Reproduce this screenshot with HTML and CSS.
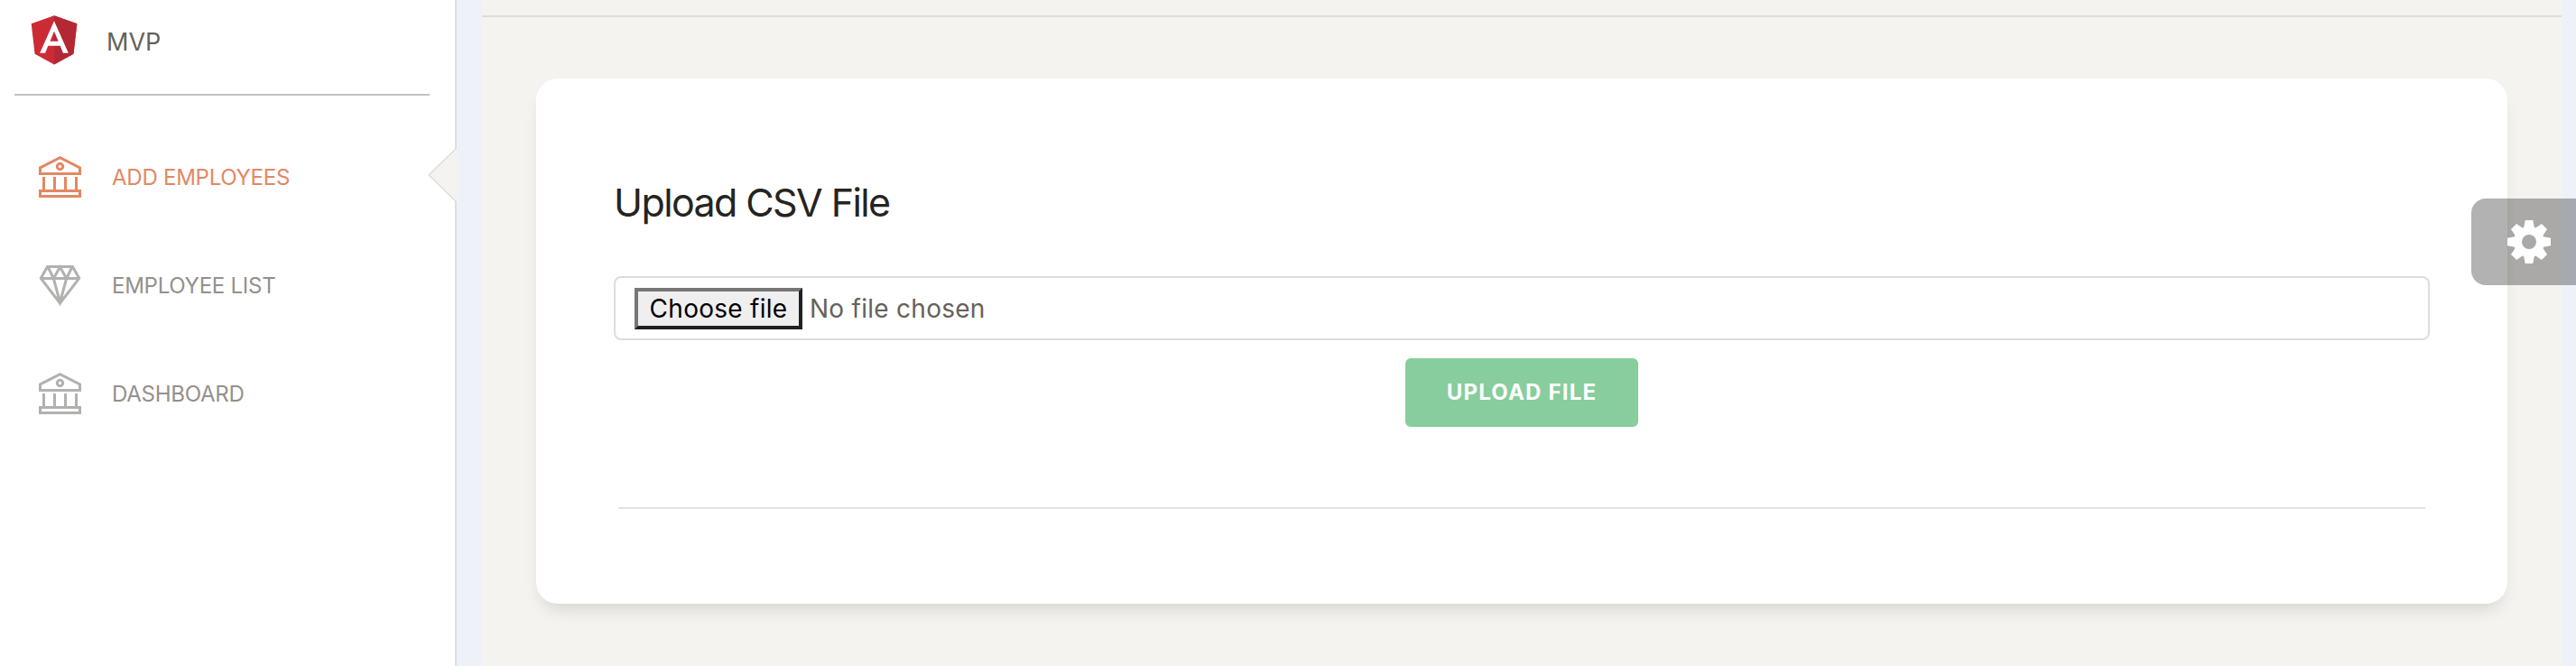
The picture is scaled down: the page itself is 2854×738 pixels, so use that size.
FILE: index.html
```html
<!DOCTYPE html>
<html lang="en">
<head>
<meta charset="utf-8">
<title>MVP</title>
<link rel="stylesheet" href="styles.css">
</head>
<body>
<svg class="defs" width="0" height="0" aria-hidden="true">
  <symbol id="bank" viewBox="0 0 47 46">
    <path d="M1.5 12.9 23.5 1.7l22 11.2v6.6h-44zM5.5 23v15M17.5 23v15M29.5 23v15M41.5 23v15M1.5 38.500h44v6h-44z"/>
    <circle cx="23.500" cy="11.500" r="3.200"/>
  </symbol>
  <symbol id="diamond" viewBox="0 0 47 46">
    <path d="M9.500 2.500h28l7.200 12.800L23.500 43 2.300 15.300zM2.300 15.500h42.400M10 2.500l6.300 13L23.500 3l7.200 12.500 6.300-13M16.300 15.500 23.500 42l7.200-26.500"/>
  </symbol>
</svg>
<div class="layout">
  <aside class="sidebar">
    <div class="brand">
      <svg class="logo" viewBox="0 0 250 250">
        <path fill="#cc2b36" d="M125 30 31.900 63.200l14.200 123.100L125 230l78.900-43.700 14.200-123.100z"/>
        <path fill="#b32833" d="M125 30v200l78.900-43.700 14.200-123.100z"/>
        <path fill="#fff" d="M125 52.100 66.800 182.600h21.700l11.700-29.200h49.400l11.700 29.200H183zm17 83.300h-34l17-40.900z"/>
      </svg>
      <span class="brand-name">MVP</span>
    </div>
    <nav class="nav">
      <a class="item active"><svg class="icon"><use href="#bank"/></svg><span>ADD EMPLOYEES</span>
        <svg class="notch" viewBox="0 0 32 60"><path d="M32 0 1 30l31 30z" fill="#f4f3ef"/><path d="M32 0 1 30l31 30" fill="none" stroke="#ddd" stroke-width="1.500"/></svg>
      </a>
      <a class="item"><svg class="icon"><use href="#diamond"/></svg><span>EMPLOYEE LIST</span></a>
      <a class="item"><svg class="icon"><use href="#bank"/></svg><span>DASHBOARD</span></a>
    </nav>
  </aside>
  <main class="main">
    <div class="topline"></div>
    <section class="card">
      <h1 class="title">Upload CSV File</h1>
      <div class="field">
        <button class="choose" type="button"><span>Choose file</span></button>
        <span class="none">No file chosen</span>
      </div>
      <button class="upload" type="button"><span>UPLOAD FILE</span></button>
      <div class="rule"></div>
    </section>
  </main>
  <div class="settings">
    <svg class="gear" viewBox="-24 -24 48 48">
      <circle r="12.500" fill="none" stroke="#fff" stroke-width="9"/>
      <g fill="#fff">
        <path id="teeth" d="M-6.500-14-5.600-17-4.300-24H4.300L5.600-17 6.500-14zM-6.500 14-5.600 17-4.300 24H4.300L5.600 17 6.500 14z"/>
        <use href="#teeth" transform="rotate(45)"/>
        <use href="#teeth" transform="rotate(90)"/>
        <use href="#teeth" transform="rotate(135)"/>
      </g>
    </svg>
  </div>
</div>
</body>
</html>
```
FILE: styles.css
```css
* { box-sizing: border-box; }
body { margin: 0; background: #eef2f8; font-family: Inter, "Liberation Sans", sans-serif; overflow: hidden; }
.defs { position: absolute; }
.layout { position: relative; display: flex; height: 738px; padding-right: 16px; }
.sidebar { flex: none; width: 506px; border-right: 2px solid #ddd; background: #fff; }
.brand { display: flex; align-items: center; height: 106px; margin: 0 28px 0 16px; padding: 0 0 14px 10px; border-bottom: 2px solid #c1c1c1; }
.logo { width: 68px; height: 68px; margin-top: -5px; }
.brand-name { margin-left: 24px; margin-top: 2px; font-size: 27px; color: #66615b; }
.nav { display: flex; flex-direction: column; padding-top: 30px; }
.item { position: relative; display: flex; align-items: center; height: 120px; padding-left: 43px; font-size: 24px; letter-spacing: -.25px; color: #94908c; white-space: nowrap; }
.icon { width: 47px; height: 46px; margin-right: 34px; fill: none; stroke: #b2b1af; stroke-width: 3; }
.active { color: #e28863; }
.active .icon { stroke: #e28863; }
.notch { position: absolute; right: -2px; top: 28px; width: 32px; height: 60px; }
.main { flex: 1; margin-left: 28px; background: #f4f3ef; }
.topline { height: 19px; border-bottom: 2px solid #ddd; }
.card { display: flex; flex-direction: column; height: 582px; margin: 68px 60px 0; padding: 110px 86px 0; border-radius: 24px; background: #fff; box-shadow: 0 12px 20px -8px rgba(0, 0, 0, .15); }
.title { margin: 0; height: 109px; font-size: 43px; line-height: 54px; font-weight: 400; letter-spacing: -1.6px; color: #252422; white-space: nowrap; }
.field { display: flex; align-items: center; height: 71px; padding-left: 21px; border: 2px solid #ddd; border-radius: 8px; font-size: 28px; letter-spacing: .27px; color: #66615b; }
.choose { display: flex; align-items: center; justify-content: center; width: 186px; height: 46px; margin: 0 8px 0 0; padding: 0; border: 4px solid; border-color: #767676 #212121 #212121 #767676; background: #efefef; font: inherit; letter-spacing: inherit; color: #000; white-space: nowrap; }
.upload { align-self: center; width: 258px; height: 76px; margin-top: 20px; padding: 0 0 2px; border: 0; border-radius: 6px; background: #87cd9d; font: 700 24px Inter, sans-serif; letter-spacing: 1.2px; color: #fff; white-space: nowrap; }
.rule { height: 2px; margin: 89px 5px 0; background: #e3e3e3; }
.settings { position: absolute; right: 0; top: 220px; width: 116px; height: 96px; padding: 24px 28px 24px 40px; border-radius: 16px 0 0 16px; background: rgba(0, 0, 0, .3); }
.gear { display: block; width: 48px; height: 48px; }
```
